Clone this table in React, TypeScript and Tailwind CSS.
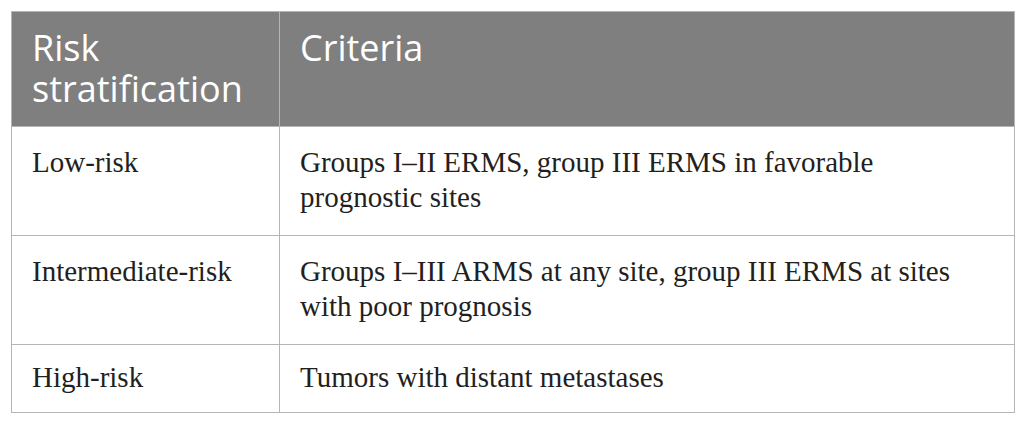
import React from "react";

const rows = [
  {
    risk: "Low-risk",
    criteria: "Groups I–II ERMS, group III ERMS in favorable prognostic sites",
    pad: "pt-[18px] pb-[20px]",
  },
  {
    risk: "Intermediate-risk",
    criteria: "Groups I–III ARMS at any site, group III ERMS at sites with poor prognosis",
    pad: "pt-[18px] pb-[20px]",
  },
  {
    risk: "High-risk",
    criteria: "Tumors with distant metastases",
    pad: "pt-[15px] pb-[17px]",
  },
];

export default function App() {
  return (
    <div className="w-[1025px] h-[424px] bg-white pt-[11px] pl-[11px]">
      <table className="w-[1004px] border-collapse border border-[#b5b5b5] table-fixed">
        <colgroup>
          <col className="w-[268px]" />
          <col />
        </colgroup>
        <thead>
          <tr className="bg-[#7f7f7f]">
            <th
              className="border border-[#b5b5b5] pl-[20px] pr-4 pt-[15px] pb-[17px] text-left align-top font-normal text-white text-[36px] leading-[41px]"
              style={{ fontFamily: '"Open Sans", "Noto Sans", sans-serif' }}
            >
              Risk
              <br />
              stratification
            </th>
            <th
              className="border border-[#b5b5b5] pl-[20px] pr-4 pt-[15px] pb-[17px] text-left align-top font-normal text-white text-[36px] leading-[41px]"
              style={{ fontFamily: '"Open Sans", "Noto Sans", sans-serif' }}
            >
              Criteria
            </th>
          </tr>
        </thead>
        <tbody>
          {rows.map((r) => (
            <tr key={r.risk}>
              <td
                className={`border border-[#b5b5b5] pl-[20px] pr-4 ${r.pad} align-top text-[29px] leading-[35px] text-[#231f20]`}
                style={{ fontFamily: '"Liberation Serif", "Times New Roman", serif' }}
              >
                {r.risk}
              </td>
              <td
                className={`border border-[#b5b5b5] pl-[20px] pr-[40px] ${r.pad} align-top text-[29px] leading-[35px] text-[#231f20]`}
                style={{ fontFamily: '"Liberation Serif", "Times New Roman", serif' }}
              >
                {r.criteria}
              </td>
            </tr>
          ))}
        </tbody>
      </table>
    </div>
  );
}
